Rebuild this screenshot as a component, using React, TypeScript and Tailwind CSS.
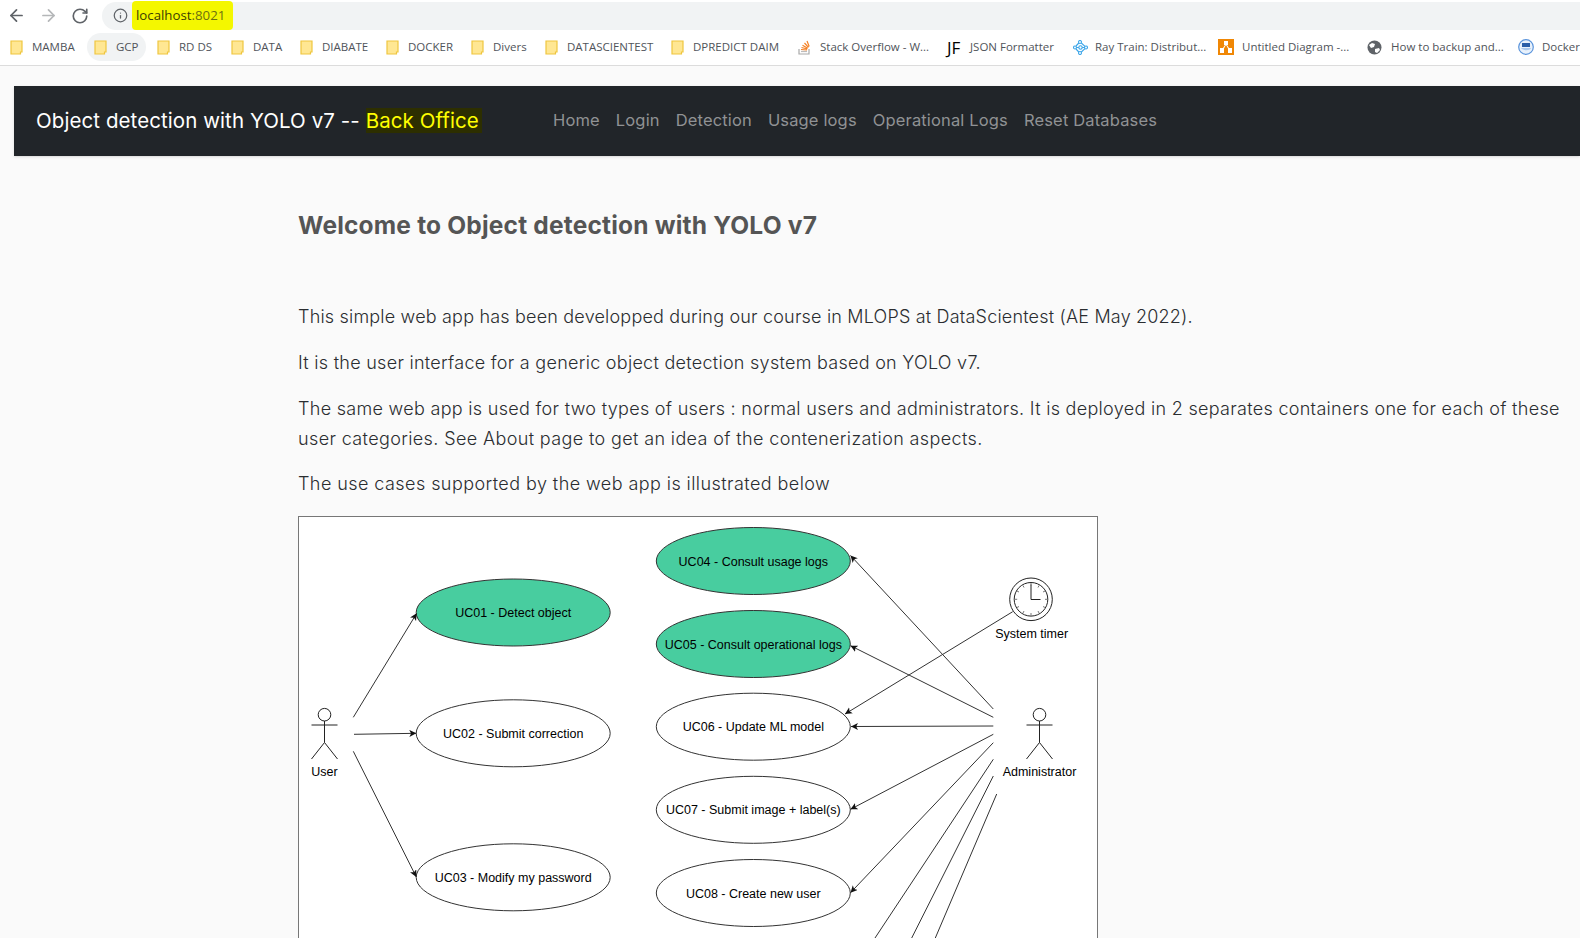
import React from 'react';
import { ArrowLeft, ArrowRight, RotateCw, Info } from 'lucide-react';

const Folder = () => (
  <svg width="13" height="15" viewBox="0 0 13 15" className="shrink-0">
    <path d="M1 1h11v11h-1.5v2H1z" fill="#ffe793" stroke="#efc63f" strokeWidth="1.2" />
  </svg>
);

const StackIcon = () => (
  <svg width="13" height="15" viewBox="0 0 13 15" className="shrink-0">
    <path d="M1 9v5h10V9" fill="none" stroke="#a9a9a9" strokeWidth="1.2" />
    <path d="M3 11.5h6" stroke="#bcbbbb" strokeWidth="1.2" />
    <path d="M3 9.5l6 .5M3.5 7.5l5.8 1.5M4.5 5.2l5.2 3M6.5 3l4 4.4M9 1l2.2 5.4" stroke="#f48024" strokeWidth="1.2" fill="none" />
  </svg>
);

const RayIcon = () => (
  <svg width="15" height="15" viewBox="0 0 15 15" className="shrink-0" fill="none" stroke="#3ba5e8" strokeWidth="1.1">
    <circle cx="2" cy="7.5" r="1.5" />
    <circle cx="7.5" cy="7.5" r="1.7" />
    <circle cx="13" cy="7.5" r="1.5" />
    <circle cx="7" cy="2" r="1.5" />
    <circle cx="7" cy="13" r="1.5" />
    <path d="M3.5 7.5h2.300M9.200 7.500h2.300M5.800 3L3 6M5.800 12L3 9M8.300 3l3.700 3.300M8.300 12l3.700-3.300" />
  </svg>
);

const DrawioIcon = () => (
  <svg width="16" height="16" viewBox="0 0 16 16" className="shrink-0">
    <rect width="16" height="16" fill="#f08705" />
    <path d="M6 2h4v4H9l2 3h3v5h-4V9.6L8.4 6.4h-.8L6 9.6V14H2V9h3l2-3H6z" fill="#fff" />
  </svg>
);

const GlobeIcon = () => (
  <svg width="15" height="15" viewBox="0 0 15 15" className="shrink-0">
    <circle cx="7.5" cy="7.5" r="7" fill="#5f6368" />
    <path d="M2 5l3-2 3 1-1 3-3 1zM8 9l4-1 1 2-3 3-2-1z" fill="#fff" />
  </svg>
);

const DockerIcon = () => (
  <svg width="16" height="16" viewBox="0 0 16 16" className="shrink-0">
    <circle cx="8" cy="8" r="7.3" fill="#e8f1fb" stroke="#5a94dc" strokeWidth="1.2" />
    <rect x="4" y="4" width="8" height="4" fill="#2a5ea8" />
    <path d="M3 9h10c-1 3-8 3-10 0z" fill="#a9c8ee" />
  </svg>
);

type Bookmark = { label: string; icon: React.ReactNode; box: string };

const bookmarks: Bookmark[] = [
  { label: 'MAMBA', icon: <Folder />, box: 'w-[84px] gap-[9px]' },
  { label: 'GCP', icon: <Folder />, box: 'w-[59px] mr-[11px] -ml-[7px] pl-[7px] h-[28px] rounded-full bg-[#f1f3f4] gap-[9px]' },
  { label: 'RD DS', icon: <Folder />, box: 'w-[74px] gap-[9px]' },
  { label: 'DATA', icon: <Folder />, box: 'w-[69px] gap-[9px]' },
  { label: 'DIABATE', icon: <Folder />, box: 'w-[86px] gap-[9px]' },
  { label: 'DOCKER', icon: <Folder />, box: 'w-[85px] gap-[9px]' },
  { label: 'Divers', icon: <Folder />, box: 'w-[74px] gap-[9px]' },
  { label: 'DATASCIENTEST', icon: <Folder />, box: 'w-[126px] gap-[9px]' },
  { label: 'DPREDICT DAIM', icon: <Folder />, box: 'w-[127px] gap-[9px]' },
  { label: 'Stack Overflow - W...', icon: <StackIcon />, box: 'w-[149px] gap-[9px]' },
  { label: 'JSON Formatter', icon: <span className="w-[18px] shrink-0 text-[17px] leading-none text-black">JF</span>, box: 'w-[126px] gap-[5px]' },
  { label: 'Ray Train: Distribut...', icon: <RayIcon />, box: 'w-[145px] gap-[7px]' },
  { label: 'Untitled Diagram -...', icon: <DrawioIcon />, box: 'w-[149px] gap-[8px]' },
  { label: 'How to backup and...', icon: <GlobeIcon />, box: 'w-[151px] gap-[9px]' },
  { label: 'Docker', icon: <DockerIcon />, box: 'w-[60px] gap-[8px]' },
];

const links = ['Home', 'Login', 'Detection', 'Usage logs', 'Operational Logs', 'Reset Databases'];

const Actor = ({ x, label }: { x: number; label: string }) => (
  <g>
    <circle cx={x} cy="714.7" r="6.3" fill="#fff" stroke="#222" />
    <path d={`M${x} 721v21.5M${x - 13} 725h26M${x - 13} 759l13-16.500 13 16.500`} fill="none" stroke="#222" />
    <text x={x} y="776" textAnchor="middle" fontSize="12.500">{label}</text>
  </g>
);

const UseCase = ({ cx, cy, label, filled }: { cx: number; cy: number; label: string; filled?: boolean }) => (
  <g>
    <ellipse cx={cx} cy={cy} rx="97" ry="33.500" fill={filled ? '#48cd9f' : '#fff'} stroke="#333" />
    <text x={cx} y={cy + 4.500} textAnchor="middle" fontSize="12.500">{label}</text>
  </g>
);

const arrows = [
  [353.3, 717.3, 416.7, 613.3],
  [354, 734.3, 416.3, 733.3],
  [353.3, 751.3, 416.3, 877],
  [993.3, 709, 850.5, 555.5],
  [993.3, 717.3, 850.5, 645.7],
  [993.3, 726, 851, 726.5],
  [993.3, 734.3, 850.5, 809.3],
  [993.3, 742.7, 850.5, 892.7],
  [1012.7, 611.7, 845, 714],
];

const Diagram = () => (
  <svg viewBox="298 516 800 480" width="800" height="480" className="block" fontFamily="'Liberation Sans', Arial, sans-serif" fill="#000">
    <defs>
      <marker id="head" markerWidth="8" markerHeight="8" refX="7" refY="3.500" orient="auto" markerUnits="userSpaceOnUse">
        <path d="M0 0L7 3.500L0 7L1.800 3.500z" fill="#111" />
      </marker>
    </defs>
    <rect x="298.5" y="516.5" width="799" height="600" fill="#fff" stroke="#777" />
    <Actor x={324.5} label="User" />
    <Actor x={1039.5} label="Administrator" />
    <UseCase cx={513.2} cy={612.5} label="UC01 - Detect object" filled />
    <UseCase cx={513.2} cy={733.3} label="UC02 - Submit correction" />
    <UseCase cx={513.2} cy={877.3} label="UC03 - Modify my password" />
    <UseCase cx={753.3} cy={561} label="UC04 - Consult usage logs" filled />
    <UseCase cx={753.3} cy={644} label="UC05 - Consult operational logs" filled />
    <UseCase cx={753.3} cy={726.7} label="UC06 - Update ML model" />
    <UseCase cx={753.3} cy={809.8} label="UC07 - Submit image + label(s)" />
    <UseCase cx={753.3} cy={893} label="UC08 - Create new user" />
    {arrows.map(([x1, y1, x2, y2], i) => (
      <line key={i} x1={x1} y1={y1} x2={x2} y2={y2} stroke="#333" markerEnd="url(#head)" />
    ))}
    <path d="M993.3 759.3L875 938M993.3 776L911.7 938M996.700 794L935.300 938" stroke="#333" fill="none" />
    <circle cx="1031" cy="599.3" r="21.300" fill="#fff" stroke="#222" />
    <circle cx="1031" cy="599.3" r="16.800" fill="#fff" stroke="#222" />
    <path d="M1031 584.500v15h9.500" fill="none" stroke="#222" />
    <path
      d="M1031 583v2.500M1031 613v2.500M1014.700 599.300h2.500M1045 599.300h2.500M1039 585.500l-1 2M1045 591l-2 1M1045 607.500l-2-1M1039 613l-1-2M1023 613l1-2M1017 607.500l2-1M1017 591l2 1M1023 585.500l1 2"
      stroke="#555"
      fill="none"
      strokeWidth="0.8"
    />
    <text x="1031.700" y="638" textAnchor="middle" fontSize="12.500">System timer</text>
  </svg>
);

export default function App() {
  return (
    <div className="h-[938px] overflow-hidden bg-[#fafafa] font-['Inter',sans-serif]">
      {/* Browser chrome */}
      <div className="bg-white font-['Open_Sans',sans-serif]">
        <div className="flex h-[30px] items-center pt-px">
          <div className="flex w-[102px] items-center text-[#5f6368]">
            <ArrowLeft size={19} strokeWidth={2.2} className="ml-[7px]" />
            <ArrowRight size={19} strokeWidth={2.2} className="ml-[13px] text-[#b5b7b9]" />
            <RotateCw size={18} strokeWidth={2.2} className="ml-[13px]" />
          </div>
          <div className="flex h-[28px] flex-1 items-center rounded-l-[14px] bg-[#f1f3f4] pl-[11px]">
            <Info size={15} className="text-[#5f6368]" />
            <div className="ml-[4px] flex h-[29px] w-[101px] items-center rounded-[4px] bg-[#f4f700] pl-[4px] text-[13.250px] text-[#3c4000]">
              localhost<span className="text-[#6d7010]">:8021</span>
            </div>
          </div>
        </div>
        <div className="flex h-[36px] items-center border-b border-[#dcdcdc] pb-px pl-[10px] text-[11.5px] text-[#50545a]">
          {bookmarks.map(b => (
            <div key={b.label} className={`flex shrink-0 items-center ${b.box}`}>
              {b.icon}
              <span className="whitespace-nowrap">{b.label}</span>
            </div>
          ))}
        </div>
      </div>

      {/* Navbar */}
      <nav className="ml-[14px] mt-[20px] flex h-[70px] items-center bg-[#212529] pl-[22px] shadow-sm">
        <div className="w-[517px] whitespace-nowrap text-[20.500px] tracking-[0.08px] text-white">
          Object detection with YOLO v7 -- <mark className="bg-[#2d2f00] pr-[3px] text-[#ffff00]">Back Office</mark>
        </div>
        <div className="flex gap-4 pb-px text-[16.500px] tracking-[0.15px] text-[#909294]">
          {links.map(l => (
            <a key={l} className="whitespace-nowrap">{l}</a>
          ))}
        </div>
      </nav>

      {/* Content */}
      <main className="pl-[298px] pr-[17px] pt-[52px] text-[18px] font-light leading-[30px] text-[#2a2d30]">
        <h1 className="text-[24.500px] font-bold leading-[34px] tracking-[0.19px] text-[#555]">Welcome to Object detection with YOLO v7</h1>
        <p className="mt-[60px] tracking-[0.19px]">
          This simple web app has been developped during our course in MLOPS at DataScientest (AE May 2022).
        </p>
        <p className="mt-[16px] tracking-[0.275px]">
          It is the user interface for a generic object detection system based on YOLO v7.
        </p>
        <p className="mt-[16px] whitespace-nowrap">
          <span className="tracking-[0.3px]">
            The same web app is used for two types of users : normal users and administrators. It is deployed in 2 separates containers one for each of these
          </span>
          <br />
          <span className="tracking-[0.37px]">user categories. See About page to get an idea of the contenerization aspects.</span>
        </p>
        <p className="mt-[15px] tracking-[0.43px]">The use cases supported by the web app is illustrated below</p>
        <div className="mt-[17px]">
          <Diagram />
        </div>
      </main>
    </div>
  );
}
